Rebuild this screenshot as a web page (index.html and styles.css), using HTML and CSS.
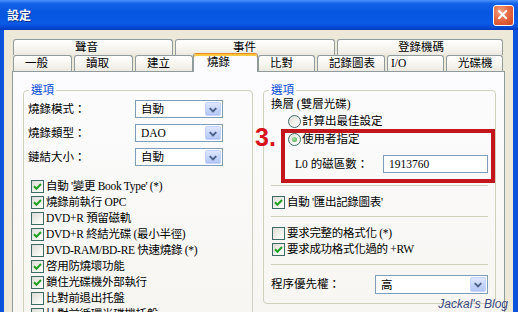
FILE: index.html
```html
<!DOCTYPE html>
<html lang="zh-Hant">
<head>
<meta charset="utf-8">
<title>設定</title>
<link rel="stylesheet" href="styles.css">
</head>
<body>
<div class="window">
  <div class="titlebar">
    <span class="title">設定</span>
    <div class="close"><svg viewBox="0 0 21 21" width="19" height="19"><path d="M5.5 5.5L13.5 13.5M13.5 5.5L5.5 13.5" stroke="#fff" stroke-width="2.2" stroke-linecap="round"/></svg></div>
  </div>
  <div class="frame">
    <div class="client">
      <div class="tabrow back">
        <div class="tab bt-1">聲音</div>
        <div class="tab bt-2">事件</div>
        <div class="tab bt-3">登錄機碼</div>
      </div>
      <div class="tabrow front">
        <div class="tab w59">一般</div>
        <div class="tab w59">讀取</div>
        <div class="tab w58">建立</div>
        <div class="tab sel">燒錄</div>
        <div class="tab w57">比對</div>
        <div class="tab w68">記錄圖表</div>
        <div class="tab w57 io">I/O</div>
        <div class="tab w57">光碟機</div>
      </div>
      <div class="panel">
        <fieldset class="group g-left">
          <legend>選項</legend>
          <div class="body-left">
            <div class="form">
              <span class="lbl">燒錄模式：</span>
              <div class="combo c88"><span class="val">自動</span><span class="dd"><svg viewBox="0 0 15 15" width="15" height="15"><path d="M4 6l3.5 3.5L11 6" fill="none" stroke="#4D6185" stroke-width="2"/></svg></span></div>
              <span class="lbl">燒錄類型：</span>
              <div class="combo c88"><span class="val">DAO</span><span class="dd"><svg viewBox="0 0 15 15" width="15" height="15"><path d="M4 6l3.5 3.5L11 6" fill="none" stroke="#4D6185" stroke-width="2"/></svg></span></div>
              <span class="lbl">鏈結大小：</span>
              <div class="combo c88"><span class="val">自動</span><span class="dd"><svg viewBox="0 0 15 15" width="15" height="15"><path d="M4 6l3.5 3.5L11 6" fill="none" stroke="#4D6185" stroke-width="2"/></svg></span></div>
            </div>
            <div class="checks">
              <div class="check"><span class="cb"><svg viewBox="0 0 11 11" width="11" height="11"><path d="M2 5.2l2.4 2.5L9 3" fill="none" stroke="#21A121" stroke-width="2"/></svg></span>自動 '變更 Book Type' (*)</div>
              <div class="check"><span class="cb"><svg viewBox="0 0 11 11" width="11" height="11"><path d="M2 5.2l2.4 2.5L9 3" fill="none" stroke="#21A121" stroke-width="2"/></svg></span>燒錄前執行 OPC</div>
              <div class="check"><span class="cb"></span>DVD+R 預留磁軌</div>
              <div class="check"><span class="cb"><svg viewBox="0 0 11 11" width="11" height="11"><path d="M2 5.2l2.4 2.5L9 3" fill="none" stroke="#21A121" stroke-width="2"/></svg></span>DVD+R 終結光碟 (最小半徑)</div>
              <div class="check"><span class="cb"></span>DVD-RAM/BD-RE 快速燒錄 (*)</div>
              <div class="check"><span class="cb"><svg viewBox="0 0 11 11" width="11" height="11"><path d="M2 5.2l2.4 2.5L9 3" fill="none" stroke="#21A121" stroke-width="2"/></svg></span>啓用防燒壞功能</div>
              <div class="check"><span class="cb"><svg viewBox="0 0 11 11" width="11" height="11"><path d="M2 5.2l2.4 2.5L9 3" fill="none" stroke="#21A121" stroke-width="2"/></svg></span>鎖住光碟機外部執行</div>
              <div class="check"><span class="cb"></span>比對前退出托盤</div>
              <div class="check"><span class="cb"></span>比對前循環光碟機托盤</div>
            </div>
          </div>
        </fieldset>
        <fieldset class="group g-right">
          <legend>選項</legend>
          <div class="body-right">
            <div class="line">換層 (雙層光碟)</div>
            <div class="radio r1"><span class="rb"></span>計算出最佳設定</div>
            <div class="radio r2"><span class="rb on"></span>使用者指定</div>
            <div class="l0row"><span class="l0lbl">L0 的磁區數：</span><div class="edit">1913760</div></div>
            <div class="sep s1"></div>
            <div class="check c-exp"><span class="cb"><svg viewBox="0 0 11 11" width="11" height="11"><path d="M2 5.2l2.4 2.5L9 3" fill="none" stroke="#21A121" stroke-width="2"/></svg></span>自動 '匯出記錄圖表'</div>
            <div class="sep s2"></div>
            <div class="check c-fmt"><span class="cb"></span>要求完整的格式化 (*)</div>
            <div class="check"><span class="cb"><svg viewBox="0 0 11 11" width="11" height="11"><path d="M2 5.2l2.4 2.5L9 3" fill="none" stroke="#21A121" stroke-width="2"/></svg></span>要求成功格式化過的 +RW</div>
            <div class="sep s3"></div>
            <div class="prio"><span class="plbl">程序優先權：</span><div class="combo c113"><span class="val">高</span><span class="dd"><svg viewBox="0 0 15 15" width="15" height="15"><path d="M4 6l3.5 3.5L11 6" fill="none" stroke="#4D6185" stroke-width="2"/></svg></span></div></div>
          </div>
        </fieldset>
      </div>
    </div>
  </div>
  <div class="annot-box"></div>
  <div class="annot-num">3.</div>
  <div class="watermark">Jackal's Blog</div>
</div>
</body>
</html>
```
FILE: styles.css
```css
* { box-sizing: border-box; }
html, body { margin: 0; padding: 0; }
body {
  width: 518px;
  height: 312px;
  overflow: hidden;
  background: #ECE9D8;
  font-family: "Liberation Serif", "Noto Sans CJK TC", serif;
  font-size: 11.5px;
  font-weight: normal;
  color: #000;
}
.window {
  position: relative;
  width: 518px;
  height: 312px;
  display: flex;
  flex-direction: column;
  overflow: hidden;
}
.titlebar {
  flex: none;
  height: 30px;
  display: flex;
  align-items: center;
  padding: 0 4px 0 7px;
  background: linear-gradient(180deg, #4A94F8 0%, #1462E8 12%, #0756E0 40%, #0A5BE6 78%, #0449D2 92%, #0338BA 100%);
}
.title {
  font-family: "Noto Sans CJK TC", sans-serif;
  font-weight: bold;
  font-size: 12px;
  line-height: 16px;
  color: #fff;
  text-shadow: 1px 1px 0 #0B2D8E;
}
.close {
  margin-left: auto;
  width: 21px;
  height: 21px;
  border: 1px solid #fff;
  border-radius: 3px;
  background: radial-gradient(circle at 35% 30%, #F2A486 0%, #E46A43 45%, #CC4420 100%);
  display: flex;
  align-items: center;
  justify-content: center;
}
.frame {
  flex: 1;
  display: flex;
  min-height: 0;
  border-left: 4px solid #0B52DD;
  border-right: 5px solid #0B52DD;
  background: #ECE9D8;
}
.client {
  flex: 1;
  display: flex;
  flex-direction: column;
  min-height: 0;
  padding: 9px 8px 0 8px;
}
.tabrow {
  display: flex;
  align-items: flex-start;
  gap: 2px;
  height: 16px;
  padding-left: 1px;
}
.tab {
  position: relative;
  height: 16px;
  border: 1px solid #919B9C;
  border-bottom: none;
  border-radius: 3px 3px 0 0;
  background: linear-gradient(180deg, #FFFFFF 0%, #F7F6F1 50%, #ECEAE0 100%);
  line-height: 14px;
  padding-left: 11px;
  white-space: nowrap;
}
.bt-1 { width: 160px; padding-left: 61px; }
.bt-2 { width: 160px; padding-left: 57px; }
.bt-3 { width: 166px; padding-left: 60px; }
.w59 { width: 59px; }
.w58 { width: 58px; }
.w57 { width: 57px; }
.w68 { width: 68px; }
.io { padding-left: 3px; }
.tab.sel {
  width: 65px;
  height: 19px;
  margin: -2px -2px -1px;
  padding-left: 13px;
  padding-top: 1px;
  z-index: 3;
  background: #FCFCFE;
  border-top: 1px solid #E68B2C;
  box-shadow: inset 0 2px 0 #FFC83C;
}
.panel {
  position: relative;
  z-index: 1;
  flex: 1;
  display: flex;
  align-items: flex-start;
  gap: 10px;
  border: 1px solid #919B9C;
  border-bottom: none;
  background: linear-gradient(180deg, #FCFCFE 0%, #F6F5F0 100%);
  padding: 11px 8px 0 10px;
}
.group {
  margin: 0;
  padding: 0;
  min-width: 0;
  border: 1px solid #D0D0BF;
  border-radius: 4px;
}
.group legend {
  margin-left: 5px;
  padding: 0 2px;
  color: #0046D5;
  line-height: 14px;
}
.g-left { width: 230px; height: 260px; }
.g-right { width: 233px; }
.body-left { padding: 3px 0 0 4px; }
.form {
  display: grid;
  grid-template-columns: 107px 88px;
  row-gap: 6px;
  align-items: center;
}
.lbl { line-height: 18px; }
.combo {
  height: 18px;
  display: flex;
  align-items: center;
  border: 1px solid #7F9DB9;
  background: #fff;
  padding: 1px;
}
.c88 { width: 88px; }
.c113 { width: 113px; height: 19px; }
.val { flex: 1; padding-left: 4px; line-height: 14px; }
.dd {
  width: 16px;
  height: 100%;
  display: flex;
  align-items: center;
  justify-content: center;
  border: 1px solid #C3D3FD;
  border-radius: 2px;
  background: linear-gradient(180deg, #DDE7FE 0%, #C6D5FB 50%, #B3C5F4 100%);
}
.checks { margin-top: 12px; padding-left: 3px; }
.check {
  display: flex;
  align-items: center;
  gap: 2px;
  height: 16px;
  line-height: 16px;
  white-space: nowrap;
  letter-spacing: -0.3px;
}
.cb {
  flex: none;
  width: 13px;
  height: 13px;
  border: 1px solid #3E6A66;
  background: linear-gradient(135deg, #DCDCD7 0%, #F2F2EE 60%, #FFFFFF 100%);
  display: flex;
  align-items: center;
  justify-content: center;
}
.body-right { padding: 0 7px 9px 7px; }
.line { line-height: 14px; }
.radio {
  display: flex;
  align-items: center;
  gap: 1px;
  height: 16px;
  line-height: 16px;
  margin-left: 17px;
}
.r1 { margin-top: 2px; }
.r2 { margin-top: 2px; }
.rb {
  flex: none;
  width: 13px;
  height: 13px;
  border: 1px solid #3E6A66;
  border-radius: 50%;
  background: linear-gradient(135deg, #DCDCD7 0%, #F4F4F0 60%, #FFFFFF 100%);
  display: flex;
  align-items: center;
  justify-content: center;
}
.rb.on::after {
  content: "";
  width: 5px;
  height: 5px;
  border-radius: 50%;
  background: radial-gradient(circle at 40% 35%, #A6E0A6, #3FA63F);
}
.l0row {
  display: flex;
  align-items: center;
  margin-top: 8px;
  margin-left: 24px;
}
.l0lbl { width: 88px; line-height: 18px; }
.edit {
  width: 105px;
  height: 18px;
  border: 1px solid #7F9DB9;
  background: #fff;
  padding-left: 5px;
  line-height: 16px;
}
.sep { height: 1px; background: #D0D0BF; }
.s1 { margin-top: 12px; }
.s2 { margin-top: 6px; }
.s3 { margin-top: 7px; }
.c-exp { margin-top: 8px; }
.c-fmt { margin-top: 8px; }
.body-right .check { margin-left: 1px; }
.prio {
  display: flex;
  align-items: center;
  margin-top: 10px;
}
.plbl { width: 104px; line-height: 19px; }
.annot-box {
  position: absolute;
  z-index: 10;
  left: 281px;
  top: 129px;
  width: 214px;
  height: 54px;
  border: 4px solid #C2151C;
}
.annot-num {
  position: absolute;
  z-index: 10;
  left: 255px;
  top: 125px;
  font-family: "Liberation Sans", sans-serif;
  font-weight: bold;
  font-size: 25px;
  line-height: 25px;
  color: #D8131B;
}
.watermark {
  position: absolute;
  z-index: 10;
  right: 10px;
  top: 298px;
  font-family: "Liberation Sans", sans-serif;
  font-style: italic;
  font-weight: normal;
  font-size: 12px;
  line-height: 12px;
  color: #3C4A80;
}
```
